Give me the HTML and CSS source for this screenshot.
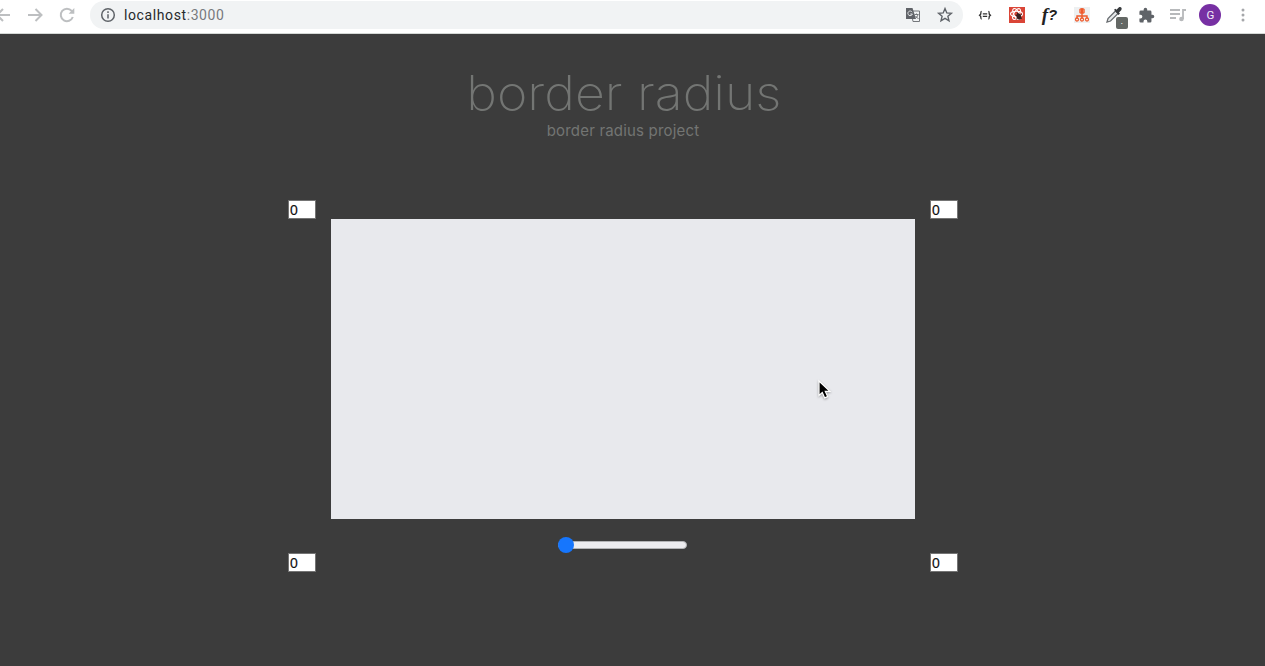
FILE: index.html
```html
<!DOCTYPE html>
<html lang="en">
<head>
<meta charset="utf-8">
<title>border radius</title>
<link rel="stylesheet" href="styles.css">
</head>
<body>
<header class="toolbar">
  <nav class="nav">
    <span class="slot"><svg width="20" height="20" viewBox="0 0 20 20" class="line pale"><path d="M17 10H4M10 4L4 10l6 6"/></svg></span>
    <span class="slot"><svg width="20" height="20" viewBox="0 0 20 20" class="line pale"><path d="M3 10h13M10.500 4l6 6-6 6"/></svg></span>
    <span class="slot"><svg width="20" height="20" viewBox="0 0 20 20" class="line pale"><path d="M15.800 12A6.200 6.200 0 1 1 14.700 5.900L16 7.200"/><path d="M17.300 3v5.700h-5.700z" class="pale-fill"/></svg></span>
  </nav>
  <div class="address">
    <svg width="16" height="16" viewBox="0 0 16 16" class="info"><circle cx="8" cy="8" r="6.300"/><path d="M8 7.200v4.200M8 4.300v1.600"/></svg>
    <span class="url">localhost<span class="port">:3000</span></span>
    <span class="slot"><svg width="16" height="16" viewBox="0 0 16 16"><path d="M6 4h8.500v10.500H8z" fill="#f1f3f4" stroke="#75787c"/><path d="M1 1h6.500l3.500 11H1z" fill="#606368"/><path d="M7.200 5.200A2.300 2.300 0 1 0 7.400 7H5.300" fill="none" stroke="#e5e7e9"/><path d="M9.500 7.500h4M11.500 6.500v1M13 7.500c-.5 2-1.500 3-2.500 4M10.500 9l3 3" fill="none" stroke="#75787c"/></svg></span>
    <span class="slot"><svg width="18" height="18" viewBox="0 0 18 18"><path d="M9 2.600l1.800 4.300 4.600.4-3.500 3 1.100 4.500L9 12.400l-4 2.400 1.100-4.500-3.500-3 4.600-.4z" fill="none" stroke="#5f6368" stroke-width="1.400"/></svg></span>
  </div>
  <div class="extensions">
    <span class="slot"><svg width="14" height="10.500" viewBox="0 0 16 12"><path d="M4.200 1.500C2.700 1.500 3.500 4.200 3 5L1.800 6 3 7c.5.800-.3 3.500 1.200 3.500M11.800 1.500c1.500 0 .7 2.700 1.200 3.500l1.200 1L13 7c-.5.800.3 3.500-1.200 3.500M5.500 4.500h5M5.500 7.300h5" fill="none" stroke="#303030" stroke-width="1.500"/></svg></span>
    <span class="slot"><svg width="16" height="16" viewBox="0 0 16 16"><path d="M0 0h16v16H0z" fill="#da4537"/><g fill="none" stroke="#fff" stroke-width="1.100"><ellipse cx="7.500" cy="7" rx="6" ry="2.700"/><ellipse cx="7.500" cy="7" rx="6" ry="2.700" transform="rotate(60 7.500 7)"/><ellipse cx="7.500" cy="7" rx="6" ry="2.700" transform="rotate(120 7.500 7)"/></g><ellipse cx="9.800" cy="9.500" rx="2.300" ry="3.300" transform="rotate(-20 9.800 9.500)" fill="#362020"/><path d="M6.500 8l6.500 3.500M12.800 7l-5.500 5M8 5.500l1 2" stroke="#362020"/></svg></span>
    <span class="slot fn">f<span class="mark">?</span></span>
    <span class="slot"><svg width="16" height="16" viewBox="0 0 16 16"><path d="M0 0h16v16H0z" fill="#eef0f1"/><circle cx="8" cy="4" r="3" fill="#ee5a2c"/><path d="M6.700 3L5.500 4l1.200 1M9.300 3l1.200 1-1.200 1" fill="none" stroke="#fff" stroke-width=".5"/><path d="M8 7v4M3 11V9h10v2" fill="none" stroke="#ee5a2c" stroke-width="1.400"/><g fill="#fff" stroke="#ee5a2c" stroke-width="1.300"><circle cx="3" cy="12.500" r="1.500"/><circle cx="8" cy="12.500" r="1.500"/><circle cx="13" cy="12.500" r="1.500"/></g></svg></span>
    <span class="slot picker"><svg width="18" height="18" viewBox="0 0 18 18"><path d="M2 16l1-3.500 7.500-7.500 2.500 2.500L5.500 15z" fill="#e8eaeb" stroke="#686c70" stroke-width="1.300"/><path d="M9 3.800l1.500-1 1 1L13.700 1.500c2-1.500 4 .9 2.500 2.700L14 6.400l1 1.200-1.500 1.500z" fill="#373a3d"/></svg><span class="badge">.</span></span>
    <span class="slot"><svg width="17" height="17" viewBox="0 0 24 24"><path d="M20.500 11H19V7a2 2 0 0 0-2-2h-4V3.500a2.500 2.500 0 0 0-5 0V5H4a2 2 0 0 0-2 2v3.800h1.500a2.700 2.700 0 0 1 0 5.400H2V20a2 2 0 0 0 2 2h3.800v-1.500a2.700 2.700 0 0 1 5.400 0V22H17a2 2 0 0 0 2-2v-4h1.500a2.500 2.500 0 0 0 0-5z" fill="#5f6368"/></svg></span>
    <span class="slot"><svg width="18" height="16" viewBox="0 0 18 16"><path d="M1 3h10M1 7h10M1 11h6M14 12V3h3" fill="none" stroke="#b7b9bb" stroke-width="1.800"/><circle cx="12.500" cy="12" r="2.300" fill="#b7b9bb"/></svg></span>
    <span class="slot"><span class="avatar">G</span></span>
    <span class="slot"><svg width="6" height="16" viewBox="0 0 6 16" fill="#a5a7aa"><circle cx="3" cy="3" r="1.500"/><circle cx="3" cy="8" r="1.500"/><circle cx="3" cy="13" r="1.500"/></svg></span>
  </div>
</header>
<main class="page">
  <h1 class="title">border radius</h1>
  <p class="subtitle">border radius project</p>
  <section class="editor">
    <input class="corner" value="0" aria-label="Top left">
    <input class="corner top-right" value="0" aria-label="Top right">
    <div class="preview"><svg class="cursor" width="16" height="22" viewBox="0 0 16 22"><path d="M2 2v14.500l3.300-3 2.400 5.400 3-1.300-2.400-5.200h4.600z" fill="#000" stroke="#fff" stroke-width="1.200"/></svg></div>
    <div class="slider"><span class="track"></span><span class="thumb"></span></div>
    <input class="corner bottom-left" value="0" aria-label="Bottom left">
    <input class="corner bottom-right" value="0" aria-label="Bottom right">
  </section>
</main>
</body>
</html>
```

FILE: styles.css
```css
* { box-sizing: border-box; }
body {
  margin: 0;
  height: 666px;
  overflow: hidden;
  display: flex;
  flex-direction: column;
  background: #3c3c3c;
  font-family: "Liberation Sans", sans-serif;
}
.toolbar {
  display: flex;
  flex: none;
  height: 34px;
  padding-bottom: 4px;
  align-items: center;
  background: #fff;
  border-bottom: 1px solid #d5d9d6;
}
.nav { display: flex; margin-left: -13px; margin-right: 7px; }
.slot {
  display: flex;
  width: 32.200px;
  height: 28px;
  flex: none;
  align-items: center;
  justify-content: center;
}
.nav .slot { width: 32px; }
.line { fill: none; stroke-width: 2; }
.pale { stroke: #bdbfc1; }
.pale .pale-fill { fill: #bdbfc1; stroke: none; }
.address {
  display: flex;
  align-items: center;
  width: 873px;
  height: 28px;
  margin-top: 1px;
  padding: 0 2px 0 10px;
  border-radius: 14px;
  background: #f1f3f4;
}
.info { fill: none; stroke: #5f6368; stroke-width: 1.500; }
.url {
  flex: 1;
  margin-left: 8px;
  font: 14px/20px Roboto, sans-serif;
  letter-spacing: 0.600px;
  color: #27292c;
}
.port { color: #777a7e; }
.extensions { display: flex; margin-left: 6px; margin-top: 1px; }
.fn { font: italic bold 19px/24px "Liberation Serif", serif; color: #222; }
.mark { font: italic bold 15px/24px "Liberation Sans", sans-serif; }
.picker { position: relative; }
.badge {
  position: absolute;
  left: 18px;
  top: 16px;
  width: 12px;
  height: 12px;
  border-radius: 2px;
  background: #646865;
  color: #fff;
  font-size: 9px;
  line-height: 8px;
  text-align: center;
}
.avatar {
  width: 22px;
  height: 22px;
  border-radius: 50%;
  background: #7730a3;
  color: #f3eaf7;
  font: 11.500px/22px Roboto, sans-serif;
  text-align: center;
}
.page {
  display: flex;
  flex: 1;
  flex-direction: column;
  align-items: center;
  width: 1246px;
  padding-top: 30px;
  color: #737573;
}
.title {
  margin: 0;
  font: 200 48px/58px Inter, sans-serif;
  letter-spacing: 0;
  transform: translateX(1px) scaleX(1.080);
}
.subtitle {
  margin: -1px 0 0;
  font: 400 15px/20px Inter, sans-serif;
  letter-spacing: 0.180px;
}
.editor {
  display: grid;
  grid-template-columns: 28px 584px 28px;
  grid-template-rows: 19px 300px 34px 19px;
  column-gap: 15px;
  margin-top: 59px;
}
.corner {
  width: 28px;
  height: 19px;
  padding: 0 1px;
  border: 1px solid #747474;
  border-radius: 0;
  background: #fff;
  color: #111;
  font: 14px/16px "Liberation Sans", sans-serif;
  -webkit-text-stroke: 0.150px #111;
}
.top-right, .bottom-right { grid-column: 3; }
.preview { position: relative; grid-area: 2 / 2; background: #e8e9ed; }
.cursor { position: absolute; left: 486px; top: 160px; filter: drop-shadow(0 1px 1px #0005); }
.slider {
  display: grid;
  grid-area: 3 / 2;
  align-items: center;
  justify-self: center;
  width: 129px;
  height: 16px;
  margin-top: 18px;
  margin-right: 2px;
}
.track {
  grid-area: 1 / 1;
  height: 8px;
  border: 1px solid #b2b3b5;
  border-radius: 4px;
  background: #ececef;
}
.thumb { grid-area: 1 / 1; width: 16px; height: 16px; border-radius: 50%; background: #1676fd; }
.bottom-left { grid-area: 4 / 1; }
.bottom-right { grid-row: 4; }
```
